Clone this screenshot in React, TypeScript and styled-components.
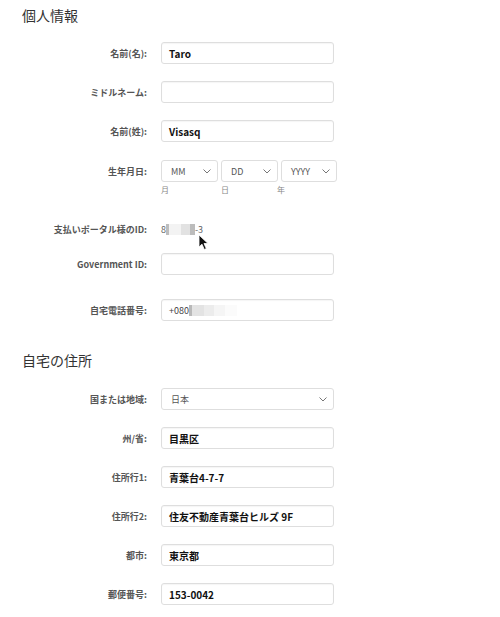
import * as React from 'react';
import styled, { createGlobalStyle } from 'styled-components';

const GlobalStyle = createGlobalStyle`
    html, body {
        margin: 0;
        padding: 0;
        background: #fff;
        font-family: "Noto Sans CJK JP", "Noto Sans", "Liberation Sans", sans-serif;
    }
`;

const Page = styled.div`
    width: 500px;
    padding-top: 5px;
    display: flex;
    flex-direction: column;
`;

const SectionTitle = styled.h2<{ $gap?: number }>`
    margin: ${p => p.$gap || 0}px 0 0 22px;
    font-size: 14px;
    line-height: 20px;
    font-weight: 400;
    color: #333;
`;

const Row = styled.div<{ $gap: number }>`
    display: grid;
    grid-template-columns: 147px 173px;
    column-gap: 14px;
    align-items: start;
    margin-top: ${p => p.$gap}px;
    position: relative;
`;

const Label = styled.label`
    height: 22px;
    display: flex;
    align-items: center;
    justify-content: flex-end;
    font-size: 9px;
    font-weight: 600;
    color: #555;
    white-space: nowrap;
`;

const Field = styled.div<{ $empty?: boolean }>`
    box-sizing: border-box;
    height: 22px;
    border: 1px solid #dedede;
    border-radius: 3px;
    box-shadow: inset 0 1px 1px rgba(0, 0, 0, 0.04);
    display: flex;
    align-items: center;
    padding: 0 7px;
    font-size: 10px;
    font-weight: 700;
    color: #111;
    white-space: nowrap;
`;

const SelectBox = styled.div<{ $width?: number }>`
    box-sizing: border-box;
    height: 22px;
    width: ${p => (p.$width ? `${p.$width}px` : '100%')};
    border: 1px solid #dedede;
    border-radius: 3px;
    display: flex;
    align-items: center;
    justify-content: space-between;
    padding: 0 6px 0 9px;
    font-size: 9px;
    color: #555;
`;

const DateGroup = styled.div`
    display: flex;
    gap: 3px;
`;

const DateColumn = styled.div`
    display: flex;
    flex-direction: column;
`;

const SubLabel = styled.span<{ $shift?: number }>`
    margin-top: 2px;
    margin-left: ${p => p.$shift || 0}px;
    font-size: 8px;
    line-height: 12px;
    color: #888;
`;

const PlainValue = styled.div`
    height: 22px;
    display: flex;
    align-items: center;
    font-size: 9px;
    color: #666;
`;

const Blur = styled.span<{ $w: number; $c: string }>`
    display: inline-block;
    width: ${p => p.$w}px;
    height: 11px;
    background: ${p => p.$c};
`;

const Cursor = styled.svg`
    position: absolute;
    left: 198px;
    top: 16px;
`;

const Chevron = () => (
    <svg width="8" height="5" viewBox="0 0 8 5">
        <path d="M0.5 0.5 L4 4 L7.5 0.5" fill="none" stroke="#666" strokeWidth="0.9" />
    </svg>
);

const Select = ({ value, width }: { value: string; width?: number }) => (
    <SelectBox $width={width}>
        <span>{value}</span>
        <Chevron />
    </SelectBox>
);

export default function App(): JSX.Element {
    return (
        <Page>
            <GlobalStyle />
            <SectionTitle>個人情報</SectionTitle>

            <Row $gap={17}>
                <Label>名前(名):</Label>
                <Field>Taro</Field>
            </Row>
            <Row $gap={17}>
                <Label>ミドルネーム:</Label>
                <Field />
            </Row>
            <Row $gap={17}>
                <Label>名前(姓):</Label>
                <Field>Visasq</Field>
            </Row>
            <Row $gap={18}>
                <Label>生年月日:</Label>
                <DateGroup>
                    <DateColumn>
                        <Select value="MM" width={57} />
                        <SubLabel>月</SubLabel>
                    </DateColumn>
                    <DateColumn>
                        <Select value="DD" width={57} />
                        <SubLabel>日</SubLabel>
                    </DateColumn>
                    <DateColumn>
                        <Select value="YYYY" width={56} />
                        <SubLabel $shift={-4}>年</SubLabel>
                    </DateColumn>
                </DateGroup>
            </Row>
            <Row $gap={22}>
                <Label>支払いポータル様のID:</Label>
                <PlainValue>
                    8
                    <Blur $w={3} $c="#bdbdbd" />
                    <Blur $w={12} $c="#f3f3f3" />
                    <Blur $w={9} $c="#e2e2e2" />
                    <Blur $w={5} $c="#bcbcbc" />
                    -3
                </PlainValue>
                <Cursor width="12" height="17" viewBox="0 0 12 17">
                    <path d="M1 1 L1 13 L4 10.2 L6.3 15.5 L8.3 14.6 L6 9.5 L10 9.5 Z" fill="#111" stroke="#fff" strokeWidth="0.8" />
                </Cursor>
            </Row>
            <Row $gap={13}>
                <Label>Government ID:</Label>
                <Field />
            </Row>
            <Row $gap={24}>
                <Label>自宅電話番号:</Label>
                <Field style={{ fontWeight: 400, fontSize: 9, color: '#444' }}>
                    +080
                    <Blur $w={3} $c="#b9b9b9" />
                    <Blur $w={12} $c="#e3e3e3" />
                    <Blur $w={10} $c="#ececec" />
                    <Blur $w={11} $c="#f5f5f5" />
                    <Blur $w={12} $c="#fbfbfb" />
                </Field>
            </Row>

            <SectionTitle $gap={29}>自宅の住所</SectionTitle>

            <Row $gap={18}>
                <Label>国または地域:</Label>
                <Select value="日本" />
            </Row>
            <Row $gap={17}>
                <Label>州/省:</Label>
                <Field>目黒区</Field>
            </Row>
            <Row $gap={17}>
                <Label>住所行1:</Label>
                <Field>青葉台4-7-7</Field>
            </Row>
            <Row $gap={17}>
                <Label>住所行2:</Label>
                <Field>住友不動産青葉台ヒルズ 9F</Field>
            </Row>
            <Row $gap={17}>
                <Label>都市:</Label>
                <Field>東京都</Field>
            </Row>
            <Row $gap={17}>
                <Label>郵便番号:</Label>
                <Field>153-0042</Field>
            </Row>
        </Page>
    );
}
